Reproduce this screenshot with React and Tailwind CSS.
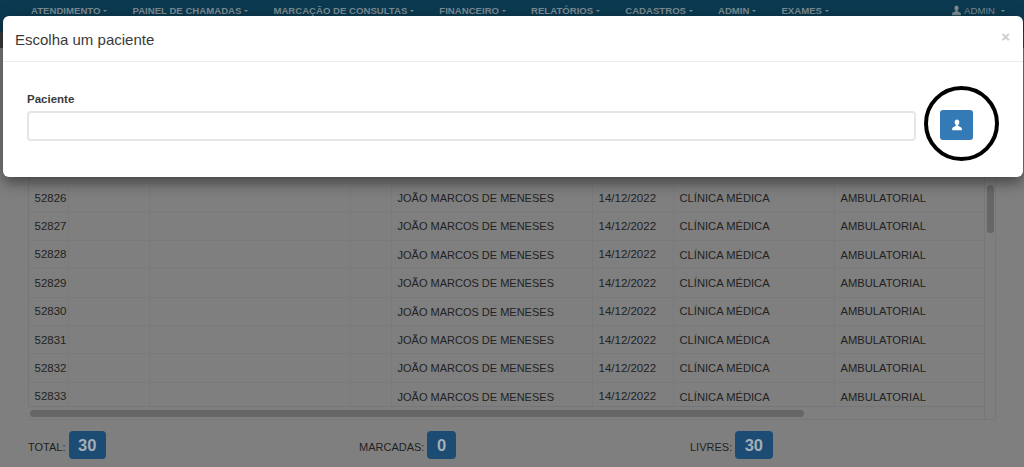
import React from 'react';

const navItems = ['ATENDIMENTO', 'PAINEL DE CHAMADAS', 'MARCAÇÃO DE CONSULTAS', 'FINANCEIRO', 'RELATÓRIOS', 'CADASTROS', 'ADMIN', 'EXAMES'];
const ids = [52826, 52827, 52828, 52829, 52830, 52831, 52832, 52833];
const cols = 'grid grid-cols-[40px_81px_201px_41px_201px_81px_161px_150px]';

function UserIcon({ className }) {
  return (
    <svg viewBox="0 0 12 12" className={className} fill="currentColor">
      <path d="M6 0.6C4.6 0.6 3.7 1.7 3.7 3.2C3.7 4.3 4.1 5.3 4.8 5.9L4.8 6.9C3.6 7.5 1.2 8.1 1.2 9.4L1.2 11.2L10.8 11.2L10.8 9.4C10.8 8.1 8.4 7.5 7.2 6.9L7.2 5.9C7.9 5.3 8.3 4.3 8.3 3.2C8.3 1.7 7.4 0.6 6 0.6Z" />
    </svg>
  );
}

function Caret({ className }) {
  return <span className={`inline-block w-0 h-0 border-x-[2px] border-t-[2px] border-x-transparent ${className}`} />;
}

function Cell({ children, className = '', last }) {
  return (
    <div className={`px-[5.5px] pt-[1px] flex items-center whitespace-nowrap overflow-hidden ${last ? '' : 'border-r border-[#7a7a7a]'} ${className}`}>
      {children}
    </div>
  );
}

function Counter({ label, value }) {
  return (
    <div className="flex items-start gap-[3px]">
      <span className="text-[11px] leading-none text-[#1f1f1f] pt-[10.5px]">{label}</span>
      <span className="h-[28px] px-[9.5px] rounded-[4px] bg-[#1c4b73] text-[#a3aeb8] text-[16.5px] font-bold flex items-center">{value}</span>
    </div>
  );
}

export default function App() {
  return (
    <div className="relative h-[467px] w-[1024px] overflow-hidden bg-[#7f7f7f] font-['Liberation_Sans',Arial,sans-serif]">
      <nav className="h-[32px] bg-[#0b3a50] flex items-start pt-[5px] pl-[31px] pr-[19px] gap-[25px] text-[9.6px] font-bold leading-[11px] text-[#7d8b92]">
        {navItems.map((item) => (
          <span key={item} className="flex items-center gap-[3px] whitespace-nowrap">
            {item}
            <Caret className="border-t-[#7d8b92]" />
          </span>
        ))}
        <span className="ml-auto flex items-center font-normal text-[9.6px] text-[#7d8b92]">
          <UserIcon className="w-[11px] h-[11px] mr-[2px]" />
          ADMIN
          <Caret className="border-t-[#7d8b92] ml-[6px]" />
        </span>
      </nav>
      <div className="h-[16px] bg-[#3d3d3d]" />

      <div className="pt-[107px] pl-[28px]">
        <div className="w-[968px] h-[265px] border-b border-r border-[#787878] flex">
          <div className="w-[956px]">
            <div className="h-[252px] overflow-hidden border-b border-[#767676] border-l">
              <div className={`${cols} h-[29px] border-b border-[#7a7a7a]`} />
              {ids.map((id) => (
                <div key={id} className={`${cols} h-[28.4px] border-b border-[#7a7a7a] text-[#222222]`}>
                  <Cell className="text-[11.5px]">{id}</Cell>
                  <Cell />
                  <Cell />
                  <Cell />
                  <Cell className="text-[11px]">JOÃO MARCOS DE MENESES</Cell>
                  <Cell className="text-[11.5px]">14/12/2022</Cell>
                  <Cell className="text-[11.2px]">CLÍNICA MÉDICA</Cell>
                  <Cell className="text-[11.2px]">AMBULATORIAL</Cell>
                </div>
              ))}
            </div>
            <div className="pt-[3px] pl-[2px]">
              <div className="w-[774px] h-[7px] rounded-full bg-[#666666]" />
            </div>
          </div>
          <div className="w-[12px] pt-[30px] pl-[2px] border-l border-[#787878]">
            <div className="w-[7px] h-[48px] rounded-full bg-[#666666]" />
          </div>
        </div>

        <div className="mt-[11px] grid grid-cols-[331px_331px_331px]">
          <Counter label="TOTAL:" value="30" />
          <Counter label="MARCADAS:" value="0" />
          <Counter label="LIVRES:" value="30" />
        </div>
      </div>

      {/* modal over the dimmed page */}
      <div className="absolute left-[3px] top-[16px] w-[1020px] h-[161px] bg-white rounded-[6px] shadow-[0_5px_15px_rgba(0,0,0,0.5)]">
        <div className="h-[46px] border-b border-[#ececec] flex items-center justify-between pl-[12px] pr-[13px]">
          <h4 className="text-[15px] leading-none text-[#3a3a3a] mt-[2px]">Escolha um paciente</h4>
          <span className="text-[15px] font-bold leading-none text-[#cccccc] mt-[-4px]">×</span>
        </div>
        <div className="flex items-end pl-[24px] pt-[31px]">
          <div className="w-[889px]">
            <label className="block text-[11.5px] font-bold leading-[12px] text-[#3a3a3a] mb-[6px]">Paciente</label>
            <input type="text" className="block w-full h-[30px] border-2 border-[#e6e6e6] rounded-[4px] bg-white outline-none" />
          </div>
          <div className="relative ml-[24px] mb-[1px]">
            <button className="w-[33px] h-[30px] rounded-[3px] bg-[#337ab7] text-white flex items-center justify-center">
              <UserIcon className="w-[12px] h-[12px]" />
            </button>
            <span className="absolute left-[-16px] top-[-24px] w-[75px] h-[75px] rounded-full border-[4px] border-black" />
          </div>
        </div>
      </div>
    </div>
  );
}
